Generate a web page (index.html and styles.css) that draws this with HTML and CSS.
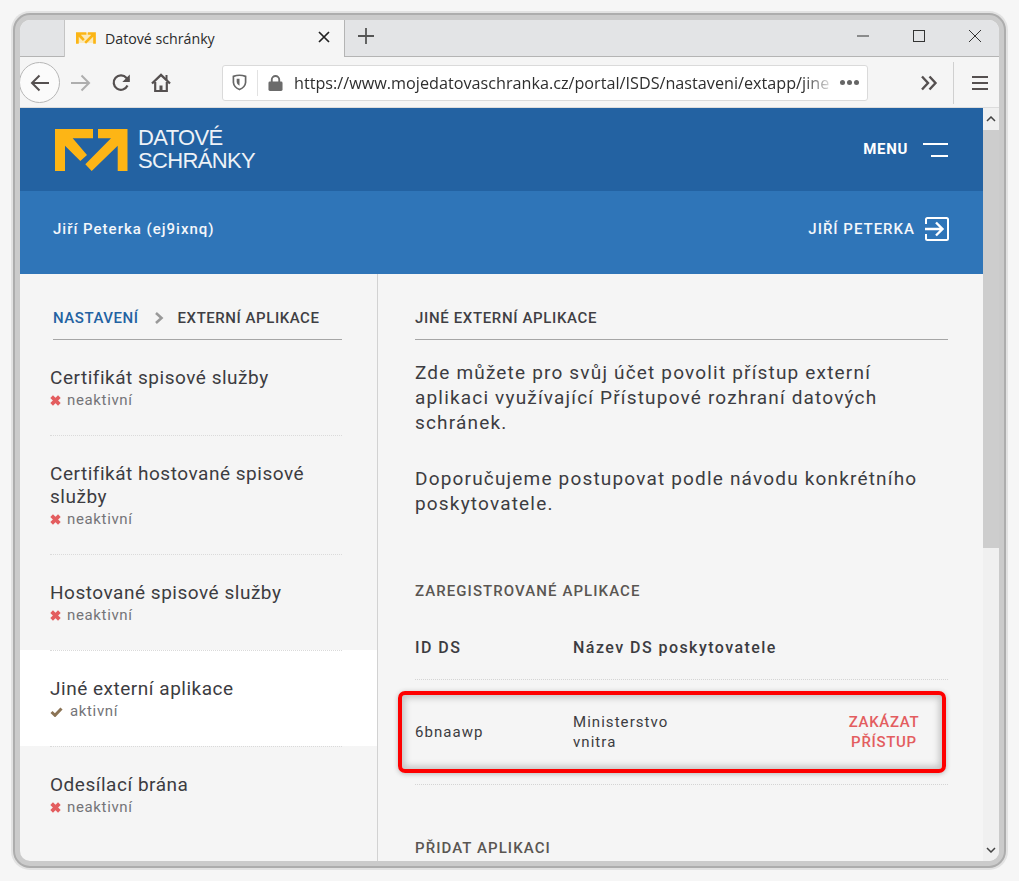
FILE: index.html
```html
<!DOCTYPE html>
<html lang="cs">
<head>
<meta charset="utf-8">
<title>Datové schránky</title>
<link rel="stylesheet" href="styles.css">
</head>
<body>
<div class="window">
  <div class="tabbar">
    <div class="tab">
      <svg class="favicon" viewBox="0 0 73 42"><rect x="6" y="3" width="60" height="36" fill="#fbe9b8"/><path fill="#fbb515" d="M0 0H38V9.300H17.700L32 26L25.300 32L10 16.700V42H0ZM43 0H72.500V42H62.700V16.700L36.700 42L30.300 35.300L56 9.300H43Z"/></svg>
      <span class="tab-title">Datové schránky</span>
      <svg class="tab-close" viewBox="0 0 12 12"><path d="M1 1L11 11M11 1L1 11" stroke="#222" stroke-width="1.7" fill="none"/></svg>
    </div>
    <svg class="newtab" viewBox="0 0 18 18"><path d="M9 1V17M1 9H17" stroke="#555" stroke-width="1.8" fill="none"/></svg>
    <div class="winctl">
      <svg class="wc" viewBox="0 0 14 14"><path d="M1 7H13" stroke="#333" fill="none"/></svg>
      <svg class="wc" viewBox="0 0 14 14"><rect x="1.5" y="1.5" width="11" height="11" stroke="#333" fill="none"/></svg>
      <svg class="wc" viewBox="0 0 14 14"><path d="M1 1L13 13M13 1L1 13" stroke="#333" fill="none"/></svg>
    </div>
  </div>
  <div class="toolbar">
    <div class="backbtn">
      <svg class="ic20" viewBox="0 0 20 20"><path d="M19 10H2M9.5 2.5L2 10L9.5 17.5" stroke="#555050" stroke-width="2" fill="none"/></svg>
    </div>
    <svg class="ic-fwd" viewBox="0 0 20 20"><path d="M0 10H18M10.5 2.5L18 10L10.5 17.5" stroke="#aeaeae" stroke-width="2" fill="none"/></svg>
    <svg class="ic-reload" viewBox="0 0 20 20"><path d="M16.5 12.5A7.2 7.2 0 1 1 15.5 5L18 7.5" stroke="#555050" stroke-width="2.2" fill="none"/><path d="M18.8 1.5V9H11.3Z" fill="#555050"/></svg>
    <svg class="ic-home" viewBox="0 0 20 20"><path d="M1 10.500L10 2L19 10.500" stroke="#555050" stroke-width="2.400" fill="none"/><path d="M14.500 2H16.500V7H14.500Z" fill="#555050"/><path d="M4.200 9V18H15.800V9" stroke="#555050" stroke-width="2.200" fill="none"/><path d="M8.500 12.500H11.500V18H8.500Z" fill="#555050"/></svg>
    <div class="urlbar">
      <svg class="ic-shield" viewBox="0 0 16 18"><path d="M1.5 2.5Q8 0 14.5 2.5V9Q14 14 8 16.5Q2 14 1.5 9Z" stroke="#666" stroke-width="1.8" fill="none"/><path d="M5 5H8V12.5Q5 11 5 8.500Z" fill="#666"/></svg>
      <span class="urlsep"></span>
      <svg class="ic-lock" viewBox="0 0 16 18"><path d="M4 8V5.500A4 4 0 0 1 12 5.500V8" stroke="#6b6b6b" stroke-width="2" fill="none"/><rect x="0.500" y="7.500" width="15" height="10" rx="1.500" fill="#6b6b6b"/></svg>
      <span class="url">https://www.mojedatovaschranka.cz/portal/ISDS/nastaveni/extapp/jine</span>
      <span class="dots"><i></i><i></i><i></i></span>
    </div>
    <svg class="ic-more" viewBox="0 0 18 16"><path d="M2 1.500L8 8L2 14.500M9.500 1.500L15.500 8L9.500 14.500" stroke="#555050" stroke-width="2.400" fill="none"/></svg>
    <span class="toolsep"></span>
    <svg class="ic-burger" viewBox="0 0 16 16"><path d="M0 2H16M0 8H16M0 14H16" stroke="#555050" stroke-width="2" fill="none"/></svg>
  </div>
  <div class="viewport">
    <div class="page">
      <header class="head-top">
        <a class="logo">
          <svg class="logo-mark" viewBox="0 0 73 42"><path fill="#fdb515" d="M0 0H38V9.300H17.700L32 26L25.300 32L10 16.700V42H0ZM43 0H72.500V42H62.700V16.700L36.700 42L30.300 35.300L56 9.300H43Z"/></svg>
          <span class="logo-text">DATOVÉ<br>SCHRÁNKY</span>
        </a>
        <div class="menu">
          <span class="menu-label">MENU</span>
          <span class="menu-ic"><i class="l1"></i><i class="l2"></i></span>
        </div>
      </header>
      <div class="head-user">
        <span class="user-id">Jiří Peterka (ej9ixnq)</span>
        <div class="user-link">
          <span>JIŘÍ PETERKA</span>
          <svg class="ic-logout" viewBox="0 0 24 24"><path d="M1 7V2.500Q1 1 2.500 1H21.500Q23 1 23 2.500V21.500Q23 23 21.500 23H2.500Q1 23 1 21.500V17" stroke="#fff" stroke-width="2" fill="none"/><path d="M0 12H17M11 5.500L17.500 12L11 18.500" stroke="#fff" stroke-width="2.400" fill="none"/></svg>
        </div>
      </div>
      <div class="columns">
        <aside class="side">
          <div class="crumbs"><b class="crumb-link">NASTAVENÍ</b><svg class="crumb-arrow" viewBox="0 0 10 12"><path d="M2 1L7.500 6L2 11" stroke="#999" stroke-width="2.600" fill="none"/></svg><b class="crumb-cur">EXTERNÍ APLIKACE</b></div>
          <div class="item first">
            <div class="item-title">Certifikát spisové služby</div>
            <div class="item-status"><svg class="ic-x" viewBox="0 0 10 10"><path d="M1.500 1.500L8.500 8.500M8.500 1.500L1.500 8.500" stroke="#e35d5f" stroke-width="3.400" fill="none"/></svg>neaktivní</div>
          </div>
          <div class="item">
            <div class="item-title">Certifikát hostované spisové služby</div>
            <div class="item-status"><svg class="ic-x" viewBox="0 0 10 10"><path d="M1.500 1.500L8.500 8.500M8.500 1.500L1.500 8.500" stroke="#e35d5f" stroke-width="3.400" fill="none"/></svg>neaktivní</div>
          </div>
          <div class="item">
            <div class="item-title">Hostované spisové služby</div>
            <div class="item-status"><svg class="ic-x" viewBox="0 0 10 10"><path d="M1.500 1.500L8.500 8.500M8.500 1.500L1.500 8.500" stroke="#e35d5f" stroke-width="3.400" fill="none"/></svg>neaktivní</div>
          </div>
          <div class="item active">
            <div class="item-title">Jiné externí aplikace</div>
            <div class="item-status"><svg class="ic-check" viewBox="0 0 13 10"><path d="M1.500 5L5 8.300L11.500 1.500" stroke="#8b7355" stroke-width="3" fill="none"/></svg>aktivní</div>
          </div>
          <div class="item">
            <div class="item-title">Odesílací brána</div>
            <div class="item-status"><svg class="ic-x" viewBox="0 0 10 10"><path d="M1.500 1.500L8.500 8.500M8.500 1.500L1.500 8.500" stroke="#e35d5f" stroke-width="3.400" fill="none"/></svg>neaktivní</div>
          </div>
        </aside>
        <main class="content">
          <h2 class="content-head">JINÉ EXTERNÍ APLIKACE</h2>
          <p class="lead">Zde můžete pro svůj účet povolit přístup externí aplikaci využívající Přístupové rozhraní datových schránek.</p>
          <p class="lead second">Doporučujeme postupovat podle návodu konkrétního poskytovatele.</p>
          <h3 class="section">ZAREGISTROVANÉ APLIKACE</h3>
          <div class="thead"><span>ID DS</span><span>Název DS poskytovatele</span></div>
          <div class="row">
            <span>6bnaawp</span>
            <span class="row-name">Ministerstvo vnitra</span>
            <a class="row-action">ZAKÁZAT PŘÍSTUP</a>
            <div class="highlight"></div>
          </div>
          <h3 class="section add">PŘIDAT APLIKACI</h3>
        </main>
      </div>
    </div>
    <div class="scrollbar">
      <svg class="sb-arrow" viewBox="0 0 10 6"><path d="M1 5L5 1L9 5" stroke="#444" stroke-width="1.500" fill="none"/></svg>
      <div class="sb-track"><div class="sb-thumb"></div></div>
      <svg class="sb-arrow" viewBox="0 0 10 6"><path d="M1 1L5 5L9 1" stroke="#444" stroke-width="1.500" fill="none"/></svg>
    </div>
  </div>
</div>
</body>
</html>
```
FILE: styles.css
```css
* { box-sizing: border-box; }
html, body { margin: 0; height: 100%; }
body {
  background: #f6f6f6;
  font-family: Roboto, "Liberation Sans", sans-serif;
  color: #3c3c41;
  overflow: hidden;
}
.window {
  width: 989px;
  height: 851px;
  margin: 15px 0 0 15px;
  border: 5px solid #cbcbcb;
  border-radius: 15px;
  box-shadow: 0 0 0 2px #adadad, 0 0 0 4px #e2e2e2;
  overflow: hidden;
  display: flex;
  flex-direction: column;
  background: #f5f5f5;
}
.tabbar {
  height: 37px;
  flex: none;
  display: flex;
  align-items: center;
  background: #e3e4e6;
  border-bottom: 1px solid #b4b4b4;
}
.tab {
  width: 281px;
  height: 37px;
  margin-left: 44px;
  padding-left: 11px;
  display: flex;
  align-items: center;
  background: #f5f5f5;
  border-left: 1px solid #c4c4c4;
  border-right: 1px solid #b4b4b4;
  flex: none;
}
.favicon { width: 20px; height: 12px; margin-right: 9px; }
.tab-title { font: 14.2px "Open Sans", sans-serif; color: #2b2b2b; width: 213px; }
.tab-close { width: 12px; height: 12px; margin-bottom: 2px; }
.newtab { width: 18px; height: 18px; margin: 0 0 4px 12px; }
.winctl { margin: 0 17px 5px auto; display: flex; gap: 42px; }
.wc { width: 14px; height: 14px; display: block; }
.toolbar {
  height: 51px;
  flex: none;
  display: flex;
  align-items: center;
  padding-top: 1px;
  background: #f5f5f5;
  border-bottom: 1px solid #dcdcdc;
}
.backbtn {
  width: 41px;
  height: 41px;
  flex: none;
  margin-left: -1px;
  border-radius: 50%;
  background: #fbfbfb;
  border: 1px solid #b6b6b6;
  display: flex;
  align-items: center;
  justify-content: center;
}
.ic20 { width: 20px; height: 20px; }
.ic-fwd { width: 20px; height: 20px; margin-left: 11px; flex: none; }
.ic-reload { width: 20px; height: 20px; margin-left: 20px; flex: none; }
.ic-home { width: 20px; height: 20px; margin-left: 20px; flex: none; }
.urlbar {
  width: 646px;
  height: 36px;
  margin-left: 51px;
  flex: none;
  display: flex;
  align-items: center;
  background: #fff;
  border: 1px solid #dadada;
  border-radius: 3px;
  padding-left: 9px;
}
.ic-shield { width: 15px; height: 17px; flex: none; }
.urlsep { width: 1px; height: 26px; background: #e2e2e2; margin: 0 10px; flex: none; }
.ic-lock { width: 15px; height: 18px; flex: none; }
.url {
  margin-left: 11px;
  width: 536px;
  padding-top: 1px;
  flex: none;
  font: 16.2px "Open Sans", sans-serif;
  color: #2e2e2e;
  white-space: nowrap;
  overflow: hidden;
  -webkit-mask-image: linear-gradient(to right, #000 95%, rgba(0,0,0,.15) 100%);
  mask-image: linear-gradient(to right, #000 95%, rgba(0,0,0,.15) 100%);
}
.dots { margin-left: 10px; display: flex; gap: 2px; }
.dots i { width: 5px; height: 5px; border-radius: 50%; background: #666; display: block; }
.ic-more { width: 18px; height: 16px; margin-left: 52px; flex: none; }
.toolsep { width: 1px; height: 42px; background: #d0d0d0; margin-left: 15px; flex: none; }
.ic-burger { width: 16px; height: 16px; margin-left: 18px; flex: none; }
.viewport { flex: 1; min-height: 0; display: flex; }
.page { width: 963px; flex: none; display: flex; flex-direction: column; overflow: hidden; }
.head-top {
  height: 83px;
  flex: none;
  background: #2362a2;
  display: flex;
  align-items: center;
  justify-content: space-between;
  padding: 0 35px 0 34px;
  color: #fff;
}
.logo { display: flex; align-items: center; }
.logo-mark { width: 73px; height: 42px; margin-left: 1px; }
.logo-text {
  margin: 0 0 2px 10px;
  font: 22px/23px "Liberation Sans", Arial, sans-serif;
  color: #eef2f7;
  letter-spacing: -0.65px;
}
.menu { display: flex; align-items: center; font-size: 15px; font-weight: 700; letter-spacing: .7px; }
.menu-label { margin-bottom: 2px; }
.menu-ic { width: 25px; height: 14px; margin-left: 15px; display: flex; flex-direction: column; justify-content: space-between; align-items: flex-end; }
.menu-ic i { height: 2px; background: #fff; display: block; }
.l1 { width: 25px; }
.l2 { width: 17px; }
.head-user {
  height: 83px;
  flex: none;
  background: #2f75b8;
  color: #f4f7fb;
  display: flex;
  align-items: center;
  justify-content: space-between;
  padding: 0 34px 8px 33px;
  font-size: 15px;
  font-weight: 500;
  letter-spacing: 1px;
}
.user-link { display: flex; align-items: center; }
.ic-logout { width: 24px; height: 24px; margin-left: 10px; }
.columns { flex: 1; min-height: 0; display: flex; }
.side { width: 358px; flex: none; border-right: 1px solid #d2d2d2; }
.crumbs {
  margin: 33px 35px 0 33px;
  height: 33px;
  padding: 1px 0 11px;
  border-bottom: 1px solid #a6a6a6;
  display: flex;
  align-items: center;
  font-size: 15px;
  letter-spacing: .55px;
}
.crumbs b { font-weight: 500; }
.crumb-link { color: #2362a2; }
.crumb-cur { color: #3f3f44; }
.crumb-arrow { width: 10px; height: 12px; margin: 0 14px 0 15px; }
.item {
  padding: 27px 35px 23px 30px;
  position: relative;
}
.item::before {
  content: "";
  position: absolute;
  left: 30px;
  right: 35px;
  top: 0;
  border-top: 1px dotted #dadada;
}
.item.first { padding-top: 26px; }
.item.first::before { display: none; }
.item.active { background: #fff; }
.item-title { font-size: 19px; line-height: 23px; letter-spacing: .52px; color: #3c3c41; }
.item-status {
  font-size: 15px;
  line-height: 23px;
  letter-spacing: .65px;
  color: #747478;
  display: flex;
  align-items: center;
}
.ic-x { width: 11px; height: 11px; margin-right: 6px; }
.ic-check { width: 13px; height: 10px; margin-right: 7px; }
.content { flex: 1; min-width: 0; padding: 33px 35px 0 37px; }
.content-head {
  margin: 0;
  height: 33px;
  padding-top: 1px;
  line-height: 20px;
  font-size: 15px;
  font-weight: 500;
  letter-spacing: .65px;
  color: #3f3f44;
  border-bottom: 1px solid #a6a6a6;
}
.lead {
  margin: 20px 0 0;
  font-size: 19px;
  line-height: 25px;
  letter-spacing: 1.18px;
  color: #3c3c41;
}
.lead.second { margin-top: 31px; }
.section {
  margin: 65px 0 0;
  line-height: 20px;
  font-size: 15px;
  font-weight: 500;
  letter-spacing: 1.08px;
  color: #5a5652;
}
.section.add { margin-top: 53px; }
.thead {
  margin-top: 37px;
  height: 42px;
  line-height: 20px;
  display: grid;
  grid-template-columns: 158px 1fr;
  font-size: 16px;
  font-weight: 500;
  letter-spacing: 1.45px;
  border-bottom: 1px dotted #d4d4d4;
}
.row {
  position: relative;
  height: 105px;
  display: grid;
  grid-template-columns: 158px 1fr 128px;
  align-items: center;
  font-size: 15px;
  line-height: 20px;
  letter-spacing: 1.05px;
  border-bottom: 1px dotted #d4d4d4;
}
.row-name { max-width: 120px; }
.row-action { color: #e35d5f; font-size: 15px; text-align: center; justify-self: center; width: 90px; font-weight: 500; letter-spacing: .7px; }
.highlight {
  position: absolute;
  left: -17px;
  right: 2px;
  top: 11px;
  height: 82px;
  border: 4px solid #fe0000;
  border-radius: 7px;
  box-shadow: inset 0 0 6px 3px #c4c4c4, 0 1px 5px #b8b8b8;
  pointer-events: none;
}
.scrollbar { flex: 1; display: flex; flex-direction: column; background: #f0f0f0; align-items: center; }
.sb-arrow { width: 10px; height: 6px; margin: 8px 0; flex: none; }
.sb-track { flex: 1; width: 100%; }
.sb-thumb { height: 418px; background: #cdcdcd; }
```
